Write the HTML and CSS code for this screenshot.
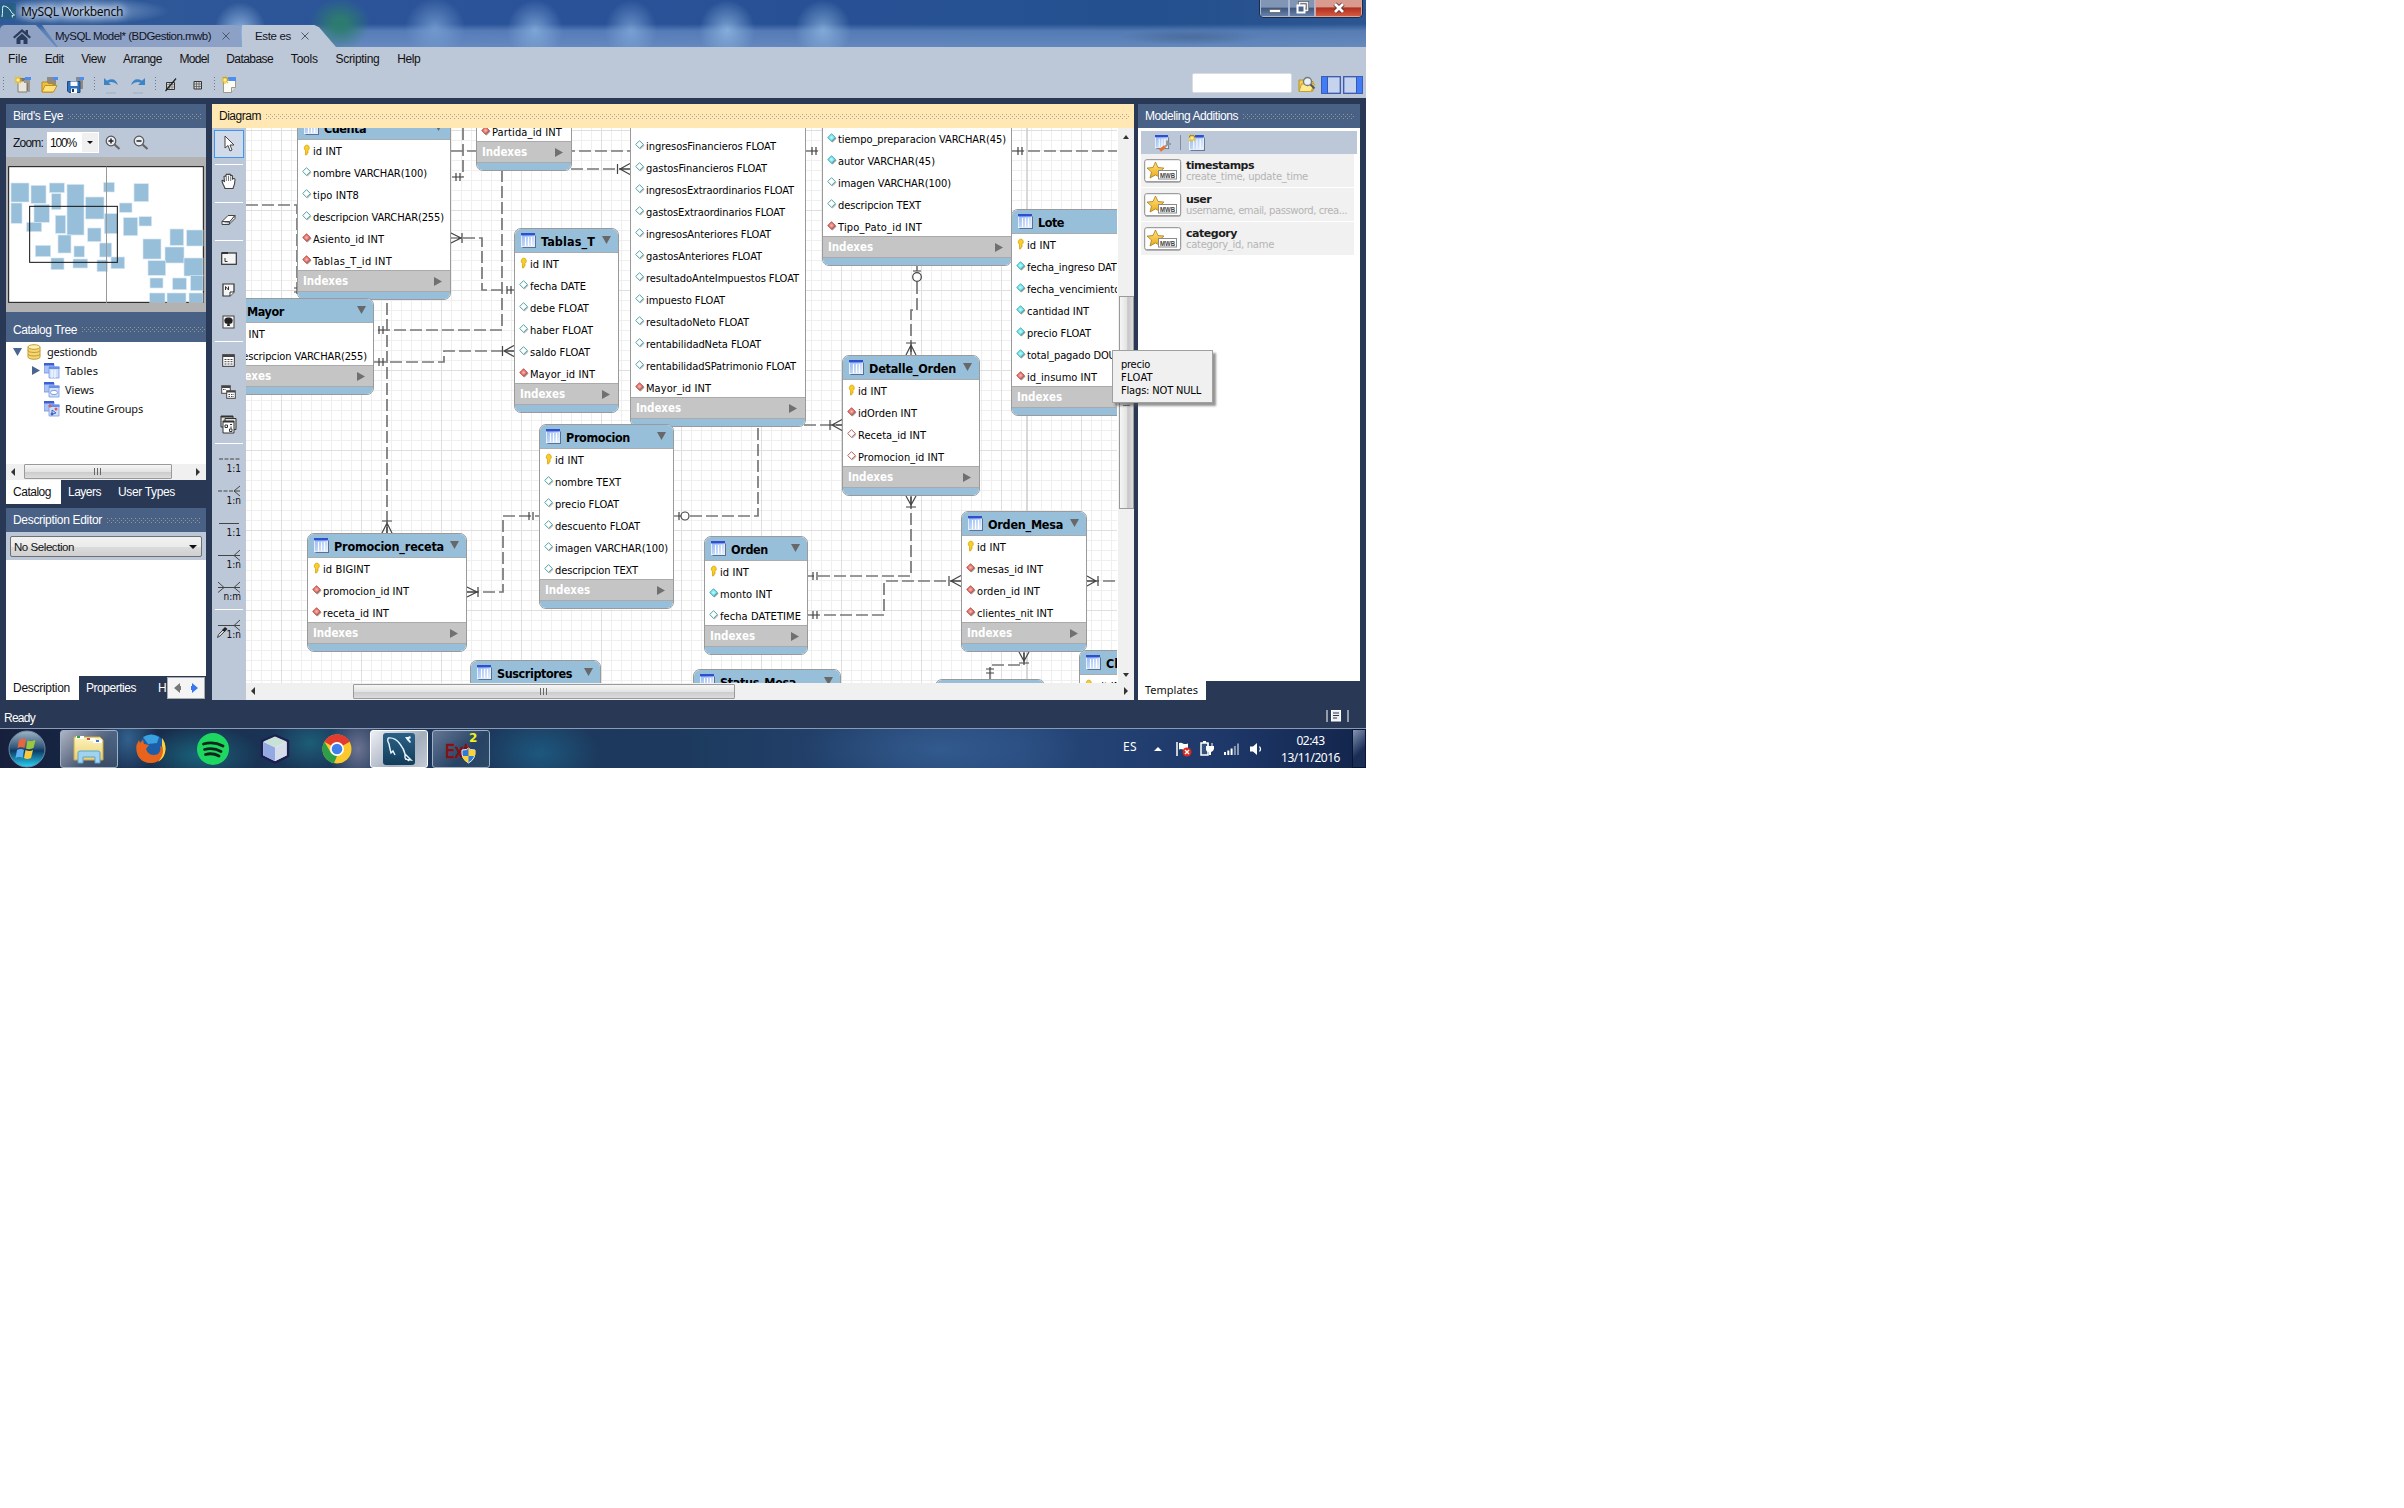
FILE: index.html
```html
<!DOCTYPE html>
<html lang="es">
<head>
<meta charset="utf-8">
<title>MySQL Workbench</title>
<link rel="stylesheet" href="styles.css">
</head>
<body>
<svg width="0" height="0" class="defs" aria-hidden="true">
  <defs>
    <linearGradient id="gTable" x1="0" y1="0" x2="1" y2="1"><stop offset="0" stop-color="#8fb4f2"/><stop offset="1" stop-color="#e8f2ff"/></linearGradient>
    <linearGradient id="gOrb" x1="0" y1="0" x2="0" y2="1"><stop offset="0" stop-color="#9fb4c6"/><stop offset=".45" stop-color="#34597a"/><stop offset=".55" stop-color="#0c3a63"/><stop offset="1" stop-color="#28d3f5"/></linearGradient>
    <linearGradient id="gFolder" x1="0" y1="0" x2="0" y2="1"><stop offset="0" stop-color="#fdf3bb"/><stop offset="1" stop-color="#e9cf73"/></linearGradient>
    <linearGradient id="gStar" x1="0" y1="0" x2="0" y2="1"><stop offset="0" stop-color="#ffe57a"/><stop offset="1" stop-color="#eba818"/></linearGradient>
    <linearGradient id="gSql" x1="0" y1="0" x2="0" y2="1"><stop offset="0" stop-color="#2b6187"/><stop offset="1" stop-color="#123c5a"/></linearGradient>
    <radialGradient id="gRed"><stop offset="0" stop-color="#f9b9b0"/><stop offset="1" stop-color="#d0504a"/></radialGradient>
    <radialGradient id="gCyan"><stop offset="0" stop-color="#b8ffff"/><stop offset="1" stop-color="#4fd0dc"/></radialGradient>
    <symbol id="table" viewBox="0 0 16 16"><rect x="1.500" y="2.500" width="13.500" height="12.500" fill="#3f5078" opacity=".7"/><rect x=".4" y=".4" width="13.200" height="13.200" fill="url(#gTable)" stroke="#f4f9ff" stroke-width=".8"/><rect x="0" y="0" width="14" height="2.400" fill="#2d4fd0"/><path d="M4.500 4v9M7.500 4v9M10.500 4v9" stroke="#fff" stroke-width="1"/></symbol>
    <symbol id="pk" viewBox="0 0 9 12"><path d="M4.500 1a3 3 0 0 0-1.500 5.400V11l1.500-.4V9h1V6.400A3 3 0 0 0 4.500 1z" fill="#f7cf2a" stroke="#dda20c" stroke-width=".8"/></symbol>
    <symbol id="null" viewBox="0 0 10 10"><path d="M5.500 1.500 9.500 5.500 5.500 9.500 1.500 5.500z" fill="#bbb"/><path d="M4.500.7 8.400 4.500 4.500 8.300.7 4.500z" fill="#fff" stroke="#4fa3a8"/></symbol>
    <symbol id="nn" viewBox="0 0 10 10"><path d="M5.500 1.500 9.500 5.500 5.500 9.500 1.500 5.500z" fill="#999"/><path d="M4.500.7 8.400 4.500 4.500 8.300.7 4.500z" fill="url(#gCyan)" stroke="#3fa9b5" stroke-width=".8"/></symbol>
    <symbol id="fk" viewBox="0 0 10 10"><path d="M5.500 1.500 9.500 5.500 5.500 9.500 1.500 5.500z" fill="#999"/><path d="M4.500.7 8.400 4.500 4.500 8.300.7 4.500z" fill="url(#gRed)" stroke="#c0483f" stroke-width=".8"/></symbol>
    <symbol id="fkn" viewBox="0 0 10 10"><path d="M5.500 1.500 9.500 5.500 5.500 9.500 1.500 5.500z" fill="#bbb"/><path d="M4.500.7 8.400 4.500 4.500 8.300.7 4.500z" fill="#fff" stroke="#b8605a"/></symbol>
    <symbol id="spark" viewBox="0 0 8 8"><path d="M4 0v8M0 4h8M1 1l6 6M7 1 1 7" stroke="#eebc1e" stroke-width="1.200"/><circle cx="4" cy="4" r="1.600" fill="#fff3a0"/></symbol>
    <symbol id="stack" viewBox="0 0 16 16"><path d="M0 1h10v9H0z" fill="#a9c4f5" stroke="#6f93dc" stroke-width=".8"/><path d="M0 0h10v2.500H0z" fill="#3c5fd6"/><path d="M5 4h10v11H5z" fill="#cfe0fb" stroke="#7b9be0" stroke-width=".8"/><path d="M5 3.500h10.500V6H5z" fill="#6a8de8"/></symbol>
    <symbol id="template" viewBox="0 0 38 24"><rect x="1" y="2" width="36" height="22" rx="2" fill="#999" opacity=".6"/><rect x=".7" y=".7" width="36" height="22" rx="2" fill="#fff" stroke="#8b8b8b"/><path d="M11.500 3l2.500 5.500 6 .6-4.600 4 1.500 6-5.400-3.200L6 19l1.500-6L3 9.100l6-.6z" fill="url(#gStar)" stroke="#a87a1c" stroke-width=".8"/><rect x="14.500" y="11.500" width="18" height="8.500" fill="#fff" stroke="#8a8a8a"/><text x="23.500" y="18.700" text-anchor="middle" textLength="15" lengthAdjust="spacingAndGlyphs" class="mwb">MWB</text></symbol>
  </defs>
</svg>

<main class="desktop">
  <header class="titlebar">
    <div class="caption">
      <svg width="16" height="16" viewBox="0 0 16 16"><rect width="16" height="16" rx="1" fill="#245f83"/><path d="M2 14C3 9 2 6 3 3c4 0 7 3 8.500 6.500l3 2.500-2.500.5.500 2" fill="none" stroke="#e4f1f8"/></svg>
      <span class="app-name" data-w="102">MySQL Workbench</span>
    </div>
    <div class="window-buttons">
      <span class="wb min"><svg width="14" height="14"><rect x="1.500" y="8.500" width="11" height="3" fill="#fff" stroke="#666" stroke-width=".8"/></svg></span>
      <span class="wb max"><svg width="14" height="14"><path d="M4.500 4V1.500h8v8H10" fill="none" stroke="#555" stroke-width="3"/><path d="M4.500 4V1.500h8v8H10" fill="none" stroke="#eee" stroke-width="1.600"/><rect x="2.500" y="4.500" width="7" height="7" fill="#4d6488" stroke="#fff" stroke-width="2"/></svg></span>
      <span class="wb close"><svg width="14" height="14"><path d="M3 3l8 8M11 3l-8 8" stroke="#5b2a27" stroke-width="4.500"/><path d="M3 3l8 8M11 3l-8 8" stroke="#fff" stroke-width="2.800"/></svg></span>
    </div>
    <nav class="tabs">
      <span class="tab home"><svg width="18" height="15" viewBox="0 0 18 15"><path d="M9 0 0 8l1.500 1.500L9 3l7.500 6.500L18 8l-3-2.700V1h-2.500v2z" fill="#2a3d5d"/><path d="M9 4.500 3.500 9.500V15h4v-4h3v4h4V9.500z" fill="#2a3d5d"/></svg></span>
      <span class="tab model"><span data-w="156">MySQL Model* (BDGestion.mwb)</span><svg class="x" width="8" height="8"><path d="M.5.5l7 7M7.500.5l-7 7" stroke="#4c5870"/></svg></span>
      <span class="tab active"><span data-w="36">Este es</span><svg class="x" width="8" height="8"><path d="M.5.5l7 7M7.500.5l-7 7" stroke="#4c5870"/></svg></span>
    </nav>
  </header>

  <nav class="menu">
    <span data-w="19">File</span><span data-w="19">Edit</span><span data-w="24">View</span><span data-w="39">Arrange</span><span data-w="29">Model</span><span data-w="47">Database</span><span data-w="27">Tools</span><span data-w="44">Scripting</span><span data-w="23">Help</span>
  </nav>

  <div class="toolbar">
    <i class="vdots"></i>
    <svg class="t1" width="18" height="18"><path d="M6 2h9v13H6z" fill="#777" /><path d="M4 5h9v11H4z" fill="#e9e6dc" stroke="#817c70"/><path d="M10 4h6v12h-2V7h-4z" fill="#9b988f"/><rect x="11" y="1" width="6" height="3" fill="#4c8ef0"/><use href="#spark" width="8" height="8"/></svg>
    <svg class="t2" width="18" height="18"><path d="M6 1h9v10H6z" fill="#8f8b80"/><rect x="12" y="1" width="5" height="3" fill="#4c8ef0"/><path d="M1 6h5l1.500 1.500H12V16H1z" fill="#f0c040" stroke="#b98a1a"/><path d="M4 9.500h12L12.500 16H1z" fill="#ffe27d" stroke="#c0921f"/></svg>
    <svg class="t3" width="18" height="18"><path d="M9 1h7v12H9z" fill="#8f8b80"/><rect x="12" y="1" width="5" height="3" fill="#4c8ef0"/><path d="M.5 5.500H13v11H2l-1.500-1.500z" fill="#2f6fc0" stroke="#1c4b8a"/><path d="M3.500 5.500h7v4.500h-7z" fill="#f4f8ff"/><path d="M4 12.500h6V17H4z" fill="#fff"/><path d="M5 13h2v3H5z" fill="#234"/></svg>
    <i class="vdots"></i>
    <svg class="t4" width="16" height="18"><path d="M1 2v7h7L5.500 6.500Q10 4.500 15 9 12 .5 4 4.700z" fill="#3c84c6"/><path d="M3 17h10" stroke="#9fadc2"/></svg>
    <svg class="t5" width="16" height="18"><path d="M15 2v7H8l2.500-2.500Q6 4.500 1 9 4 .5 12 4.700z" fill="#3c84c6"/><path d="M3 17h10" stroke="#9fadc2"/></svg>
    <i class="vdots"></i>
    <svg class="t6" width="12" height="14"><path d="M1.500 4.500h8v7h-8z" fill="#d7d7d7" stroke="#333"/><path d="M2 6.500h7M2 9h7M4.500 5v6M7 5v6" stroke="#777" stroke-width=".7"/><path d="M.5 13 11 .5" stroke="#222" stroke-width="1.300"/></svg>
    <svg class="t7" width="10" height="12"><path d="M1 2.500h7.500v7.500H1z" fill="#d7d7d7" stroke="#333"/><path d="M1 5h7.500M1 7.500h7.500M3.500 2.500V10M6 2.500V10" stroke="#555" stroke-width=".7"/></svg>
    <i class="vdots"></i>
    <svg class="t8" width="16" height="18"><path d="M2.500 2.500h12v9l-4 5h-8z" fill="#fdfdf6" stroke="#9a9a8c"/><rect x="2" y="1" width="13" height="4" fill="#4c8ef0"/><path d="M10.500 16.500v-5h4" fill="#ddd" stroke="#9a9a8c"/><use href="#spark" width="8" height="8"/></svg>
    <span class="search"></span>
    <svg class="t9" width="18" height="17"><path d="M1 4h5l1 1.500h8V15H1z" fill="#f0cc50" stroke="#b9921a"/><path d="M3.500 8h13L13 15.500H1z" fill="#ffe88e" stroke="#c0a02f"/><circle cx="9.500" cy="5.500" r="4" fill="#e8f1f8" stroke="#777" stroke-width="1.300"/><path d="M12.500 8.500l4 4" stroke="#555" stroke-width="2"/></svg>
    <svg class="t10" width="20" height="18"><rect x=".7" y=".7" width="18.600" height="16.600" fill="#c6d3ee" stroke="#3a57b0" stroke-width="1.300"/><rect x="1" y="1" width="5.500" height="16" fill="#3f7cf5"/><path d="M6.500 1v16" stroke="#3a57b0"/></svg>
    <svg width="20" height="18"><rect x=".7" y=".7" width="18.600" height="16.600" fill="#c6d3ee" stroke="#3a57b0" stroke-width="1.300"/><rect x="13.500" y="1" width="5.500" height="16" fill="#3f7cf5"/><path d="M13.500 1v16" stroke="#3a57b0"/></svg>
  </div>

  <div class="workspace">
    <aside class="left">
      <h2 class="bar"><span data-w="50">Bird's Eye</span><i class="grip"></i></h2>
      <div class="zoombar">
        <span data-w="30">Zoom:</span>
        <span class="zoomsel"><span data-w="26">100%</span><b><i class="tri"></i></b></span>
        <svg width="16" height="16"><circle cx="6" cy="6" r="4.800" fill="#e8edf4" stroke="#555" stroke-width="1.200"/><path d="M9.500 9.500l5 4.500" stroke="#666" stroke-width="2.200"/><path d="M3.500 6h5M6 3.500v5" stroke="#222" stroke-width="1.500"/></svg>
        <svg width="16" height="16"><circle cx="6" cy="6" r="4.800" fill="#e8edf4" stroke="#555" stroke-width="1.200"/><path d="M9.500 9.500l5 4.500" stroke="#666" stroke-width="2.200"/><path d="M3.500 6h5" stroke="#222" stroke-width="1.500"/></svg>
      </div>
      <div class="birdseye"><svg id="minimap" width="196" height="137" viewBox="24 498 588 411"><rect x="26" y="500" width="584" height="407" fill="#fff" stroke="#111" stroke-width="3"/><g id="miniTables"></g><path d="M319.500 500v409" stroke="#999" stroke-width="3"/><rect x="89" y="619" width="263" height="168" fill="none" stroke="#111" stroke-width="3"/></svg></div>
      <h2 class="bar tall"><span data-w="64">Catalog Tree</span><i class="grip"></i></h2>
      <div class="tree">
        <div class="node root"><svg width="9" height="8"><path d="M0 0h9L4.500 8z" fill="#4a6590"/></svg><svg class="db" width="14" height="16"><path d="M1 3v10c0 3 12 3 12 0V3" fill="#f5d672" stroke="#c29c35"/><ellipse cx="7" cy="3" rx="6" ry="2.300" fill="#fdf0b4" stroke="#c29c35"/><path d="M1 6.500c0 2.600 12 2.600 12 0M1 10c0 2.600 12 2.600 12 0" fill="none" stroke="#c29c35"/></svg><span data-w="50">gestiondb</span></div>
        <div class="node"><svg width="8" height="9"><path d="M0 0v9l8-4.500z" fill="#4a6590"/></svg><svg class="st" width="16" height="16"><use href="#stack"/><path d="M8 7v8M11 7v8" stroke="#fff"/></svg><span data-w="33">Tables</span></div>
        <div class="node"><svg width="8" height="9"></svg><svg class="st" width="16" height="16"><use href="#stack"/><ellipse cx="10" cy="10.500" rx="3.500" ry="2.200" fill="#fff" stroke="#7b9be0"/></svg><span data-w="29">Views</span></div>
        <div class="node"><svg width="8" height="9"></svg><svg class="st" width="16" height="16"><use href="#stack"/><path d="M8 9l4 3-4 1z" fill="none" stroke="#4668b8"/><circle cx="6" cy="5" r="1.500" fill="#d85a5a"/><circle cx="12" cy="8" r="1.500" fill="#d85a5a"/><circle cx="8" cy="13" r="1.500" fill="#3d62c4"/></svg><span data-w="78">Routine Groups</span></div>
      </div>
      <div class="hscroll"><i class="al"></i><b class="thumb"><i class="ridge"></i></b><i class="ar"></i></div>
      <div class="tabrow"><span class="on" data-w="38">Catalog</span><span data-w="33">Layers</span><span data-w="57">User Types</span></div>
      <h2 class="bar desc"><span data-w="89">Description Editor</span><i class="grip"></i></h2>
      <div class="selbar"><span class="select"><span data-w="60">No Selection</span><i class="tri"></i></span></div>
      <div class="blank"></div>
      <div class="tabrow low"><span class="on" data-w="57">Description</span><span data-w="50">Properties</span><span class="cut">H</span><em><svg width="28" height="12"><path d="M8 1v3h1v4H8v3L2 6z" fill="#777"/><path d="M20 1v3h-1v4h1v3l6-5z" fill="#3a76f0"/></svg></em></div>
    </aside>

    <section class="diagram">
      <h2 class="bar yellow"><span data-w="42">Diagram</span><i class="grip"></i></h2>
      <div class="editor">
        <div class="tools">
          <span class="tool sel"><svg width="12" height="18"><path d="M2 1v12l3-2.500 2 5.500 2-1-2-5h4z" fill="#fff" stroke="#444"/></svg></span><hr>
          <span class="tool hand"><svg width="16" height="17"><path d="M4 15.500C3 12 .8 10 1 7.500c1.500-.5 2 .5 2.500 1.500L3 3.500c1-1 2-.5 2 .5V2c.5-1.200 2-1 2.200 0 .3-1.200 2-1.200 2.300 0V3c.5-1 2-.8 2 .4V6c1.200-1 2.600-.4 2.500 1C14 10 13 13 12 15.500z" fill="#fff" stroke="#444" stroke-width="1.100"/><path d="M5.300 4v4M7.500 3v5M9.700 3.500V8" stroke="#666" stroke-width=".9"/></svg></span><hr>
          <span class="tool eraser"><svg width="16" height="12"><path d="M1 7.500 7 1.500h7L8.500 8z" fill="#fff" stroke="#444"/><path d="M1 7.500V10.500h7L14 4.500v-3L8.500 8v2.500M1 7.500h7.500" fill="#eee" stroke="#444"/></svg></span><hr>
          <span class="tool s"><svg width="16" height="14"><rect x=".7" y="2" width="14.600" height="11.300" fill="#f5f5f5" stroke="#333" stroke-width="1.200"/><path d="M1 1h6v2H1z" fill="#333"/><path d="M4 7v3.500h2.500" fill="none" stroke="#333"/></svg></span>
          <span class="tool s"><svg width="13" height="14"><path d="M1 1h11v8l-4 4H1z" fill="#f5f5f5" stroke="#333" stroke-width="1.200"/><path d="M8 13V9h4" fill="#fff" stroke="#333"/><path d="M3.500 7V3.500L6.500 7V3.500" fill="none" stroke="#333"/></svg></span>
          <span class="tool s"><svg width="13" height="14"><rect x="1" y="1" width="11" height="12" fill="#f5f5f5" stroke="#444"/><path d="M6.500 2.500a3.500 3 0 0 1 4 4c0 2-2 2.500-3 2l.5 2.500H5l.5-2.500c-1 .5-3 0-3-2a3.500 3 0 0 1 4-4z" fill="#222"/></svg></span><hr class="h2">
          <span class="tool s"><svg width="13" height="13"><rect x=".7" y=".7" width="11.600" height="11.600" fill="#fff" stroke="#333"/><path d="M1 1h11v2H1z" fill="#444"/><path d="M2.500 5.500h8M2.500 7.700h8M2.500 10h8" stroke="#444" stroke-dasharray="2 1"/></svg></span>
          <span class="tool s"><svg width="15" height="14"><rect x=".7" y=".7" width="8.600" height="7.600" fill="#fff" stroke="#444"/><path d="M1 1h8v2H1z" fill="#444"/><rect x="5.700" y="5.700" width="8.600" height="7.600" fill="#fff" stroke="#444"/><path d="M6 6h8v1.500H6z" fill="#444"/><path d="M2 4.500h3M7.500 9.500h5.500M7.500 11.500h5.500" stroke="#444" stroke-dasharray="1.500 1"/></svg></span>
          <span class="tool s"><svg width="17" height="19"><path d="M1 1h12v11H1z" fill="#ddd" stroke="#333"/><path d="M5 3.500h11v11H5z" fill="#ddd" stroke="#333"/><path d="M3 6h11v12H3z" fill="#fff" stroke="#333"/><path d="M1 1h12v1.500H1zM3 6h11v1.500H3z" fill="#333"/><path d="M5 10h2.500v2.500H5zM9.500 14h2.500v2.500H9.500zM10 9.500h2M11 11.500v2" fill="none" stroke="#333"/></svg></span><hr class="h3">
          <span class="rel"><svg width="33" height="32"><path d="M7 9h21" stroke="#444" stroke-dasharray="4 1.500"/><text x="29" y="22">1:1</text></svg></span>
          <span class="rel"><svg width="33" height="32"><path d="M6 9h17" stroke="#444" stroke-dasharray="4 1.500"/><path d="M28 4 22 9l6 5M22 9h6" fill="none" stroke="#444"/><text x="29" y="22">1:n</text></svg></span>
          <span class="rel"><svg width="33" height="32"><path d="M7 9.500h20" stroke="#444"/><text x="29" y="22">1:1</text></svg></span>
          <span class="rel"><svg width="33" height="32"><path d="M6 9.500h22M28 4l-6 5.500 6 5" fill="none" stroke="#444"/><text x="29" y="22">1:n</text></svg></span>
          <span class="rel"><svg width="33" height="32"><path d="M6 9.500h22M28 4l-6 5.500 6 5M6 4l6 5.500-6 5" fill="none" stroke="#444"/><text x="29" y="22">n:m</text></svg></span><hr class="h4">
          <span class="rel"><svg width="33" height="32"><path d="M6 9.500h22M28 4l-6 5.500 6 5" fill="none" stroke="#444"/><path d="M5.500 21.500l1-3 4.500-4.500 1.500 1.500-4.500 4.500z" fill="#ddd" stroke="#444"/><path d="M10 14l3-3 2.500 2-3 3z" fill="#222"/><text x="29" y="22">1:n</text></svg></span>
        </div>
        <div class="canvas-col">
          <div class="canvas-row">
            <div class="canvas" id="canvas">
              <svg class="links" width="871" height="555" viewBox="246 128 871 555">
                <path d="M1027 128v555" stroke="#cfcfcf" stroke-width="1.600"/>
                <g class="dash">
                  <path d="M246 205H297V298M451 151H630M806 151h16M1012 151h105M463 128V177H451M571 169h59M502 170V330H374M463 238H482V290H514M374 362H444V351H514M387 303V533M467 592H503V516H539M690 516H758V427M804 425h38M917 266v5M917 282V310H911V355M911 497V576H808M808 615H884V581H961M1087 581h30M1024 653V665H990V679"/>
                </g>
                <g class="mark">
                  <path d="M294 288h3M294 292h3M812 147v8M816 147v8M1018 147v8M1022 147v8M456 173v8M460 173v8"/>
                  <path d="M617.500 164v10M630 163.500 620 169l10 5.500M620 169h10M451 233l10 5-10 5M451 238h10M462 233v10M507 286v8M511 286v8"/>
                  <path d="M379 326v8M383 326v8M379 358v8M383 358v8M502.500 346v10M514 345.500 504 351l10 5.500M504 351h10"/>
                  <path d="M382 521h10M382 533l5-10 5 10M387 523v10M467 587l10 5-10 5M467 592h10M478 587v10M529 512v8M533 512v8"/>
                  <path d="M674 516h7M679 512v8M830 420v10M842 419.500 832 425l10 5.500M832 425h10M913 271h8M906 343h10M906 355l5-10 5 10M911 345v10"/>
                  <path d="M906 496l5 9 5-9M911 496v9M906 507h10M813 572v8M817 572v8M813 611v8M817 611v8M949 576v10M961 575.500 951 581l10 5.500M951 581h10"/>
                  <path d="M1087 576l9 5-9 5M1087 581h9M1098 576v10M1019 652l5 9 5-9M1024 652v9M1019 663h10M986 669h8M986 673h8"/>
                  <circle cx="685" cy="516" r="4"/><circle cx="917" cy="277" r="4.300"/>
                </g>
              </svg>
            </div>
            <div class="vscroll"><i class="au"></i><b class="vthumb"><i></i></b><i class="ad"></i></div>
          </div>
          <div class="hscroll wide"><i class="al"></i><b class="thumb"><i class="ridge"></i></b><i class="ar"></i></div>
        </div>
      </div>
    </section>

    <aside class="right">
      <h2 class="bar"><span data-w="93">Modeling Additions</span><i class="grip"></i></h2>
      <div class="additions">
        <div class="addbar">
          <svg width="17" height="18"><use href="#table" x="0" y="1" width="15" height="15"/><path d="M5 16.500l5-4" stroke="#e8742c" stroke-width="3"/><path d="M10 12.500l4-3M12 6.500v3.500h4" fill="none" stroke="#999" stroke-width="2"/></svg>
          <i></i>
          <svg width="18" height="18"><use href="#table" x="1" y="1" width="17" height="17"/><use href="#spark" width="8" height="8"/></svg>
        </div>
        <div class="tpl"><svg width="38" height="24"><use href="#template"/></svg><div><b data-w="68">timestamps</b><small data-w="122">create_time, update_time</small></div></div>
        <div class="tpl"><svg width="38" height="24"><use href="#template"/></svg><div><b data-w="25">user</b><small data-w="161">username, email, password, crea...</small></div></div>
        <div class="tpl"><svg width="38" height="24"><use href="#template"/></svg><div><b data-w="51">category</b><small data-w="88">category_id, name</small></div></div>
      </div>
      <div class="tabrow"><span class="on" data-w="53">Templates</span></div>
    </aside>
    <div class="tooltip"><span data-w="29">precio</span><span data-w="32">FLOAT</span><span data-w="80">Flags: NOT NULL</span></div>
  </div>

  <footer class="status"><span data-w="31">Ready</span><svg width="24" height="12"><path d="M1 0v12M22 0v12" stroke="#fff"/><rect x="5.500" y=".5" width="9" height="10.500" fill="#eee" stroke="#fff"/><path d="M7 3h6M7 5.500h6M7 8h4" stroke="#293955"/></svg></footer>

  <div class="taskbar">
    <span class="orb"><svg width="40" height="40"><circle cx="20" cy="20" r="18" fill="url(#gOrb)" stroke="#6d8aa6"/><g transform="translate(0 1)"><path d="M12 10q4-2 7-.5L17.500 18q-4-2-7 0z" fill="#e8643a"/><path d="M20.500 10.500q4 1.500 8-.5L26.500 18q-4 2-7.500.5z" fill="#98c93c"/><path d="M10 20q4-2 7 0l-1.500 8q-3-2-7 0z" fill="#5fb0f0"/><path d="M18.500 20q4 2 7.500 0l-2 8q-4 2-7 0z" fill="#fbc93a"/></g></svg></span>
    <span class="slot open"><svg width="34" height="32"><path d="M2 4h26l3 3v20H2z" fill="url(#gFolder)" stroke="#c8a94a"/><path d="M4 3h8v3H4zM15 5h8v3h-8zM21 7h9v3h-9z" fill="#fff"/><path d="M5 3h3v2H5z" fill="#2fa83a"/><path d="M15 5h3v2h-3z" fill="#d84a3a"/><path d="M24 7h3v2h-3z" fill="#3a7ad8"/><path d="M6 30V20q0-2 2-2h18q2 0 2 2v10h-5v-6H11v6z" fill="#9fd3ef" stroke="#5fa3cc"/></svg></span>
    <span class="slot"><svg width="32" height="32"><circle cx="17" cy="15" r="13.500" fill="#1c5fa8"/><path d="M8 4Q16-1 24 4l-2 6-9 1z" fill="#3aa0e0"/><path d="M27 5c7 9 3 24-10 25C6 31 0 22 1.500 12L4 7l1 3 3-3 1 4 5 1-3 4q2 6 8 6 8-1 6-9 3 1 3 4 2-6-1-12z" fill="#e8641c"/><path d="M27 5c6 8 4 20-4 24 5-6 6-11 4-16z" fill="#ffd23a"/></svg></span>
    <span class="slot"><svg width="32" height="32"><circle cx="16" cy="16" r="16" fill="#1ed760"/><path d="M6.500 11q10-3 19.500 2M7.500 16.500q9-2.500 16.500 2M8.500 21.500q7-2 13.500 1.500" fill="none" stroke="#10251a" stroke-width="2.800" stroke-linecap="round"/></svg></span>
    <span class="slot"><svg width="30" height="30"><path d="M15 1.500 28 7v15L15 28.500 2 22V7z" fill="#dfe9fa" stroke="#1d1f50" stroke-width="2.500"/><path d="M15 2.500 26.500 7.500 15 13 3.500 7.500z" fill="#c8e2d8"/><path d="M3.500 8 15 13.500V27L3.500 21.500z" fill="#92a9e2"/><path d="M26.500 8 15 13.500V27l11.500-5.500z" fill="#d5ddea"/></svg></span>
    <span class="slot"><svg width="32" height="32"><circle cx="16" cy="16" r="14.500" fill="#fbc92c"/><path d="M16 16 3.400 8.800A14.500 14.500 0 0 1 28.600 8.800z" fill="#e23b30"/><path d="M3.400 8.800 10 20l6 3-3 7.300A14.500 14.500 0 0 1 3.400 8.800z" fill="#2f9e48"/><path d="M16 9h12.800q-5-8-13-7.500Z" fill="#e23b30"/><circle cx="16" cy="16" r="7" fill="#fff"/><circle cx="16" cy="16" r="5.300" fill="#3f80ea"/></svg></span>
    <span class="slot open bright"><svg width="32" height="32"><rect width="32" height="32" rx="3" fill="url(#gSql)"/><path d="M5 5q7-1 12 6 4 5 5 10l6 6-6-1M5 5q-1 3 1 6 1 5 2 9l2-2 2 4M22 21l0 4 4 3" fill="none" stroke="#e8f4fb" stroke-width="1.400"/><path d="M22 4l2 3 3 3 1-1-2-3 2-1-1-2-2 1z" fill="#e8f4fb"/></svg></span>
    <span class="slot open dim"><svg width="34" height="36"><text x="1" y="27" textLength="25" lengthAdjust="spacingAndGlyphs" class="ext">Ext</text><text x="25" y="11" class="two">2</text><path d="M18 19q6 0 6.500-2 .5 2 6.500 2 1 9-6.500 13-7.500-4-6.500-13z" fill="#2f7ad8" stroke="#eee"/><path d="M24.500 17.500V25H31q.3-3 0-6-5 0-6.500-1.500zM18 25h6.500v7q-5-2.500-6.500-7z" fill="#fbd23a"/></svg></span>
    <div class="tray">
      <span class="es" data-w="14">ES</span>
      <svg class="up" width="8" height="4"><path d="M0 4l4-4 4 4z" fill="#fff"/></svg>
      <svg class="flag" width="16" height="16"><path d="M1 1v14" stroke="#fff" stroke-width="1.500"/><path d="M3 2q2.500-.5 4 .5t5 0v6q-3 1-5 0t-4 0z" fill="#fff"/><circle cx="11" cy="11" r="4.500" fill="#d82a20"/><path d="M9 9l4 4M13 9l-4 4" stroke="#fff" stroke-width="1.400"/></svg>
      <svg class="plug" width="15" height="17"><path d="M1 3h7v12H1z" fill="#33547f" stroke="#fff" stroke-width="1.500"/><path d="M3 1h3v2H3z" fill="#fff"/><path d="M6 6h8v3q-1 3-3 3v3H9v-3q-3 0-3-3zM7.500 3h1v3h-1zM11.500 3h1v3h-1z" fill="#fff"/></svg>
      <svg class="sig" width="15" height="12"><path d="M0 9h2v3H0zM3.300 7.500h2V12h-2zM6.600 5.500h2V12h-2z" fill="#fff"/><path d="M9.900 3h2v9h-2zM13 .5h2V12h-2z" fill="#8a98b0"/></svg>
      <svg class="spk" width="13" height="14"><path d="M0 4.500h3L7 1v12L3 9.500H0z" fill="#fff"/><path d="M9.500 4.500q2 2.500 0 5" fill="none" stroke="#fff" stroke-width="1.200"/></svg>
      <span class="clock"><span data-w="28">02:43</span><span data-w="59">13/11/2016</span></span>
      <i class="show"></i>
    </div>
  </div>
</main>
<script src="script.js"></script>
</body>
</html>
```
FILE: styles.css
```css
* { box-sizing: border-box; }
body { margin: 0; background: #fff; font: 12px "Liberation Sans", Arial, sans-serif; color: #111; }
.defs { position: absolute; }
svg { display: block; flex: none; }
i, em { font-style: normal; }
[data-w] { white-space: nowrap; }
.desktop { width: 1366px; height: 768px; display: flex; flex-direction: column; background: #293955; overflow: hidden; }

/* window frame */
.titlebar { height: 47px; position: relative; display: flex; flex-wrap: wrap; justify-content: space-between; align-content: flex-start;
  background:
    radial-gradient(ellipse 90px 14px at 80px 11px, rgba(165,190,225,.8), transparent),
    radial-gradient(ellipse 30px 26px at 340px 24px, rgba(45,125,110,.95) 20%, transparent),
    radial-gradient(ellipse 26px 30px at 240px 32px, rgba(160,195,235,.85), transparent),
    radial-gradient(ellipse 30px 30px at 435px 28px, rgba(125,165,215,.75), transparent),
    radial-gradient(ellipse 28px 30px at 535px 30px, rgba(140,180,225,.75), transparent),
    radial-gradient(ellipse 26px 30px at 631px 30px, rgba(140,180,225,.65), transparent),
    radial-gradient(ellipse 28px 30px at 727px 30px, rgba(150,190,230,.75), transparent),
    radial-gradient(ellipse 28px 30px at 823px 30px, rgba(150,190,230,.7), transparent),
    radial-gradient(ellipse 70px 8px at 1190px 37px, rgba(65,95,140,.6), transparent),
    linear-gradient(180deg, transparent 24px, rgba(130,165,215,.5) 31px, rgba(140,172,218,.6) 100%),
    linear-gradient(90deg, #2f5a97, #2a5299 40%, #24508f 85%, #2c5691); }
.caption { display: flex; align-items: center; height: 22px; gap: 5px; width: 500px; }
.app-name { font: 12px "Noto Sans", sans-serif; color: #0a0a0a; text-shadow: 0 0 6px #dfe9f7, 0 0 8px #dfe9f7, 0 0 12px #c9d9ee; }
.window-buttons { display: flex; width: 104px; height: 18px; margin-right: 3px; border: 1px solid #1d2c44; border-top: 0; border-radius: 0 0 5px 5px; overflow: hidden; }
.wb { display: flex; align-items: center; justify-content: center; border: 1px solid #a8b8cf; border-top: 0; background: linear-gradient(#8195b5 45%, #3e5680 50%, #6681ab); }
.min { width: 29px; } .max { width: 26px; } .close { flex: 1; background: linear-gradient(#d99a90 42%, #b0301f 50%, #d65a41); border-color: #d9a79f; }
.tabs { display: flex; height: 22px; margin-top: 3px; width: 100%; }
.tab { display: flex; align-items: center; font-size: 11.500px; color: #10151f; height: 22px; }
.home { width: 56px; padding-left: 13px; background: #8fa2c4; clip-path: polygon(0 0, 64% 0, 100% 100%, 0 100%); border-radius: 5px 0 0 0; }
.model { margin-left: -14px; width: 199px; padding-left: 13px; background: #8da1c6; clip-path: polygon(0 0, 97% 0, 100% 12%, 100% 100%, 8% 100%); }
.model .x { margin-left: 11px; }
.active { margin-left: 1px; width: 94px; padding-left: 13px; background: #bcc7d8; clip-path: polygon(0 0, 77% 0, 82% 10%, 100% 100%, 0 100%); }
.active .x { margin-left: 10px; }
.menu { height: 24px; background: #bcc7d8; display: flex; align-items: center; gap: 17.650px; padding-left: 8px; }
.toolbar { height: 27px; background: #bcc7d8; display: flex; align-items: center; padding: 0 3px 0 3px; }
.vdots { width: 1px; height: 15px; background: repeating-linear-gradient(#6f7b90 0 1px, transparent 1px 3px); }
.t1 { margin-left: 10px; } .t2 { margin-left: 9px; } .t3 { margin-left: 8px; margin-right: 9px; }
.t4 { margin-left: 8px; } .t5 { margin-left: 11px; margin-right: 9px; } .t6 { margin-left: 9px; } .t7 { margin: 0 11px 0 16px; }
.t8 { margin-left: 6px; } .search { width: 100px; height: 20px; margin: -3px 6px 0 auto; background: #fff; border: 1px solid #d9dce2; border-radius: 2px; }
.t10 { margin: 0 2px 0 5px; }

/* docked panels */
.workspace { height: 602px; padding: 6px 6px 0 6px; display: flex; position: relative; }
.bar { margin: 0; height: 24px; flex: none; display: flex; align-items: center; gap: 5px; padding: 0 5px 0 7px; background: #4a6186; color: #fff; font-size: 12px; font-weight: 400; }
.yellow { background: #ffe8b4; color: #111; }
.tall { height: 30px; padding-right: 0; padding-top: 5px; }
.desc { margin-top: 4px; }
.grip { flex: 1; height: 5px; opacity: .8; background-image: radial-gradient(circle at .5px .5px, #a9a596 .6px, transparent .8px), radial-gradient(circle at 2.500px 2.500px, #a9a596 .6px, transparent .8px); background-size: 4px 4px; }
.yellow .grip { opacity: 1; }
.left { width: 200px; height: 596px; display: flex; flex-direction: column; }
.zoombar { height: 29px; background: #bcc7d8; display: flex; align-items: center; padding-left: 7px; }
.zoombar svg { margin-left: 6px; } .zoombar svg + svg { margin-left: 12px; }
.zoomsel { width: 52px; height: 21px; margin-left: 4px; background: #fff; display: flex; justify-content: space-between; align-items: center; padding-left: 3px; }
.zoomsel b { width: 16px; height: 19px; margin-right: 1px; background: #f0f0f0; display: flex; align-items: center; justify-content: center; }
.tri { width: 0; height: 0; border: 3px solid transparent; border-top: 3.500px solid #111; border-bottom: 0; }
.birdseye { height: 155px; background: #b2b2b2; padding: 9px 0 0 2px; }
.tree { height: 122px; background: #fff; font: 11px "Noto Sans", "Open Sans", sans-serif; padding: 0 0 0 7px; }
.node { height: 19px; display: flex; align-items: center; padding-left: 19px; }
.root { padding-left: 0; } .db { margin: 0 6px 0 5px; } .st { margin: 0 5px 0 4px; }
.hscroll { height: 16px; background: #f0f0f0; display: flex; align-items: center; padding: 0 6px 1px 5px; }
.thumb { width: 148px; height: 15px; margin-left: 9px; border: 1px solid #9a9a9a; border-radius: 1px; background: linear-gradient(#f6f6f6, #e4e4e4 50%, #cbcbcb 52%, #dcdcdc); display: flex; align-items: center; justify-content: center; }
.ridge { width: 8px; height: 7px; background: repeating-linear-gradient(90deg, #666 0 1px, transparent 1px 3px); }
.al { border: 4px solid transparent; border-right-color: #333; border-left: 0; }
.ar { border: 4px solid transparent; border-left-color: #333; border-right: 0; margin-left: auto; }
.al, .ar { width: 4px; height: 8px; }
.tabrow { height: 24px; display: flex; color: #fff; flex: none; }
.tabrow > span { display: flex; align-items: center; margin-right: 17px; }
.tabrow .on { background: #fff; color: #111; padding: 0 10px 0 7px; margin-right: 7px; box-sizing: content-box; }
.tabrow.low .on { padding-right: 9px; }
.low .cut { margin: 0; padding-left: 5px; width: 14px; }
.low em { width: 38px; height: 22px; margin: 1px 1px 0 auto; background: #f4f4f4; border: 1px solid #aaa; display: flex; align-items: center; justify-content: center; }
.selbar { height: 28px; background: #bcc7d8; padding: 4px 4px 0; }
.select { height: 21px; border: 1px solid #707070; border-radius: 2px; background: linear-gradient(#f2f2f2, #ebebeb 50%, #dcdcdc 52%, #cfcfcf); display: flex; align-items: center; justify-content: space-between; padding: 0 4px 0 3px; font-size: 11.500px; }
.select .tri { border-width: 4px 4px 0; }
.blank { flex: 1; background: #fff; }

/* diagram editor */
.diagram { width: 922px; height: 596px; margin-left: 6px; display: flex; flex-direction: column; }
.editor { display: flex; flex: 1; }
.tools { width: 34px; background: #bcc7d8; }
.tools hr { border: 0; height: 1px; margin: 0 3px 1px; width: 28px; background: #fff; }
.tools .h2 { margin-top: 3px; margin-bottom: 2px; } .tools .h3 { margin: 3px 3px 6px; } .tools .h4 { margin: -1px 3px 6px; }
.tool { display: flex; height: 36px; width: 34px; align-items: center; justify-content: center; padding-right: 1px; }
.hand { padding-bottom: 6px; } .eraser { padding-bottom: 4px; }
.tool.s { height: 32px; }
.tools .sel { height: 28px; width: 30px; margin: 2px 2px 6px; border: 1px solid #3b97f3; background: #d0dae8; }
.rel { display: block; height: 32px; }
.rel text { font: 10px "DejaVu Sans Condensed", "DejaVu Sans", sans-serif; text-anchor: end; fill: #111; }
.canvas-col { flex: 1; display: flex; flex-direction: column; background: #fff; }
.canvas-row { display: flex; height: 555px; }
.canvas { width: 871px; height: 555px; position: relative; overflow: hidden; background-color: #fff;
  background-image: linear-gradient(90deg, #dfdfdf 1px, transparent 1px), linear-gradient(#dfdfdf 1px, transparent 1px), linear-gradient(90deg, #efefef 1px, transparent 1px), linear-gradient(#efefef 1px, transparent 1px);
  background-size: 80px 80px, 80px 80px, 10px 10px, 10px 10px; background-position: 35px 0, 0 2px, 5px 0, 0 2px; }
.links { position: absolute; left: 0; top: 0; }
.dash path { fill: none; stroke: #777; stroke-width: 1.700; stroke-dasharray: 12 4; }
.mark { fill: none; stroke: #444; stroke-width: 1.200; }
.mark circle { fill: #fff; }
.vscroll { width: 16px; margin-left: 1px; background: #f0f0f0; display: flex; flex-direction: column; align-items: center; padding: 7px 0 6px; }
.au { border: 3.500px solid transparent; border-bottom: 4px solid #333; border-top: 0; }
.ad { border: 3.500px solid transparent; border-top: 4px solid #333; border-bottom: 0; margin-top: auto; }
.vthumb { width: 15px; height: 213px; margin-top: 157px; border: 1px solid #9a9a9a; background: linear-gradient(90deg, #f6f6f6, #e4e4e4 50%, #c6c6c6 60%, #dcdcdc); display: flex; align-items: center; justify-content: center; }
.vthumb i { width: 7px; height: 8px; background: repeating-linear-gradient(#666 0 1px, transparent 1px 3px); }
.wide { height: 17px; } .wide .thumb { width: 382px; margin-left: 98px; }

/* entity figures placed on the canvas */
.entity { position: absolute; background: #fff; border: 1px solid #9a9a9a; border-radius: 7px; overflow: hidden; font: 11px "DejaVu Sans Condensed", "DejaVu Sans", sans-serif; font-stretch: condensed; }
.entity header { height: 24px; background: #98bfda; border-bottom: 1px solid #a9adb0; display: flex; align-items: center; padding: 1px 7px 0 6px; font-weight: 700; font-size: 12.500px; color: #000; }
.entity header svg { margin-right: 4px; margin-top: -1px; }
.entity header .down { margin: -3px 0 0 auto; }
.column { height: 22px; display: flex; align-items: center; padding-left: 4px; white-space: nowrap; color: #000; }
.column svg { margin: -2px 1px 0 0; }
.indexes { height: 22px; background: #c5c5c5; border: solid #aaa; border-width: 1px 0; display: flex; align-items: center; justify-content: space-between; padding: 0 8px 0 5px; color: #fff; font-weight: 700; font-size: 11.500px; }
.cap { height: 7px; background: #98bfda; }

/* right dock */
.right { width: 222px; height: 596px; margin-left: 4px; display: flex; flex-direction: column; }
.additions { flex: none; height: 553px; background: #fff; padding: 3px; }
.right .tabrow { height: 19px; } .right .on { padding: 0 8px 2px 7px; font: 11px "Noto Sans", sans-serif; }
.addbar { height: 23px; background: #bcc7d8; display: flex; align-items: center; padding-left: 14px; }
.addbar i { width: 1px; height: 15px; background: #7f8ca3; margin: 0 7px 0 8px; }
.tpl { width: 213px; height: 33px; margin-bottom: 1px; background: #f1f1f1; display: flex; padding: 5px 0 0 3px; gap: 4px; }
.tpl div { display: flex; flex-direction: column; }
.tpl b { font: 700 11px/13px "DejaVu Sans", sans-serif; color: #1c1c1c; }
.tpl small { font: 10px/10px "DejaVu Sans", sans-serif; color: #b4b4b4; }
.mwb { font: 700 7.500px "Liberation Sans", sans-serif; fill: #444; }
.tooltip { position: absolute; left: 1112px; top: 252px; width: 101px; height: 53px; padding: 7px 0 0 8px; display: flex; flex-direction: column; align-items: flex-start; background: #f0f0f0; border: 1px solid #a0a0a0; box-shadow: 3px 3px 2px rgba(80,80,80,.6); font: 11px/13px "DejaVu Sans Condensed", sans-serif; color: #000; }

.status { height: 28px; display: flex; align-items: center; justify-content: space-between; padding: 7px 16px 0 4px; color: #fff; }
.status svg { margin-bottom: 3px; }

/* windows taskbar */
.taskbar { height: 40px; border-top: 1px solid #8b9bb5; display: flex; align-items: center;
  background:
    radial-gradient(ellipse 60px 30px at 200px 26px, rgba(25,120,140,.7), transparent),
    radial-gradient(ellipse 30px 40px at 128px 10px, rgba(60,120,170,.7), transparent),
    radial-gradient(ellipse 40px 30px at 310px 14px, rgba(30,120,140,.6), transparent),
    radial-gradient(ellipse 30px 40px at 358px 20px, rgba(130,130,160,.8), transparent),
    radial-gradient(ellipse 60px 40px at 540px 24px, rgba(30,100,140,.7), transparent),
    radial-gradient(ellipse 140px 50px at 940px 20px, rgba(60,105,160,.6), transparent),
    linear-gradient(90deg, #16203c, #1a3456 20%, #1d3a5e 50%, #27487a 75%, #1d3768 90%, #12244a); }
.orb { width: 53px; padding-left: 7px; margin-right: 7px; }
.slot { width: 58px; height: 38px; margin-right: 4px; display: flex; align-items: center; justify-content: center; }
.open { border: 1px solid #9fb0c4; border-radius: 3px; background: linear-gradient(135deg, rgba(225,228,240,.75), rgba(110,125,150,.55) 60%, rgba(80,100,120,.5)); }
.bright { background: linear-gradient(135deg, #edeff5, #a2aebd 60%, #c3cbd6); border-color: #fff; }
.dim { background: linear-gradient(135deg, rgba(150,160,190,.6), rgba(50,80,110,.5) 60%, rgba(60,90,115,.5)); }
.ext { font: 19px "DejaVu Sans Condensed", sans-serif; fill: #8c0d0d; stroke: #8c0d0d; stroke-width: .7; }
.two { font: 700 12px "DejaVu Sans", sans-serif; fill: #f5ee1e; }
.tray { margin-left: auto; display: flex; align-items: center; height: 39px; color: #fff; font: 12px "Noto Sans", sans-serif; }
.es { margin-top: -5px; } .up { margin: 0 0 0 17px; } .flag { margin-left: 14px; } .plug { margin-left: 8px; } .sig { margin-left: 9px; } .spk { margin-left: 11px; }
.clock { display: flex; flex-direction: column; align-items: center; line-height: 17px; margin-left: 18px; width: 59px; }
.show { width: 14px; height: 39px; margin-left: 12px; border: 1px solid #0a1630; background: linear-gradient(135deg, #8494b4, #1a2d55 60%); }
```
FILE: script.js
```js
// Entity figures of the model: x/y/width on the canvas sheet, then [icon, label, label width].
const ORIGIN = { x: 246, y: 128 };
const entities = [
  { x: 297, y: 115, w: 154, title: "Cuenta", tw: 42, cols: [["pk", "id INT", 29], ["null", "nombre VARCHAR(100)", 114], ["null", "tipo INT8", 46], ["null", "descripcion VARCHAR(255)", 131], ["fk", "Asiento_id INT", 71], ["fk", "Tablas_T_id INT", 79]] },
  { x: 220, y: 298, w: 154, title: "Mayor", tw: 37, cols: [["pk", "id INT", 29], ["null", "descripcion VARCHAR(255)", 131]] },
  { x: 476, y: 96, w: 96, title: "", cols: [["fk", "Partida_id INT", 70]] },
  { x: 514, y: 228, w: 105, title: "Tablas_T", tw: 54, cols: [["pk", "id INT", 29], ["null", "fecha DATE", 56], ["null", "debe FLOAT", 59], ["null", "haber FLOAT", 63], ["null", "saldo FLOAT", 60], ["fk", "Mayor_id INT", 65]] },
  { x: 630, y: 88, w: 176, title: "", cols: [null, ["null", "ingresosFinancieros FLOAT", 130], ["null", "gastosFinancieros FLOAT", 121], ["null", "ingresosExtraordinarios FLOAT", 148], ["null", "gastosExtraordinarios FLOAT", 139], ["null", "ingresosAnteriores FLOAT", 125], ["null", "gastosAnteriores FLOAT", 116], ["null", "resultadoAnteImpuestos FLOAT", 153], ["null", "impuesto FLOAT", 79], ["null", "resultadoNeto FLOAT", 103], ["null", "rentabilidadNeta FLOAT", 115], ["null", "rentabilidadSPatrimonio FLOAT", 150], ["fk", "Mayor_id INT", 65]] },
  { x: 822, y: 103, w: 190, title: "", cols: [["nn", "tiempo_preparacion VARCHAR(45)", 168], ["nn", "autor VARCHAR(45)", 97], ["null", "imagen VARCHAR(100)", 113], ["null", "descripcion TEXT", 83], ["fk", "Tipo_Pato_id INT", 84]] },
  { x: 1011, y: 209, w: 160, title: "Lote", tw: 26, cols: [["pk", "id INT", 29], ["nn", "fecha_ingreso DATE", 96], ["nn", "fecha_vencimiento DATE", 122], ["nn", "cantidad INT", 62], ["nn", "precio FLOAT", 64], ["nn", "total_pagado DOUBLE", 107], ["fk", "id_insumo INT", 70]] },
  { x: 842, y: 355, w: 138, title: "Detalle_Orden", tw: 87, cols: [["pk", "id INT", 29], ["fk", "idOrden INT", 59], ["fkn", "Receta_id INT", 68], ["fkn", "Promocion_id INT", 86]] },
  { x: 539, y: 424, w: 135, title: "Promocion", tw: 64, cols: [["pk", "id INT", 29], ["null", "nombre TEXT", 66], ["null", "precio FLOAT", 64], ["null", "descuento FLOAT", 85], ["null", "imagen VARCHAR(100)", 113], ["null", "descripcion TEXT", 83]] },
  { x: 307, y: 533, w: 160, title: "Promocion_receta", tw: 110, cols: [["pk", "id BIGINT", 47], ["fk", "promocion_id INT", 86], ["fk", "receta_id INT", 66]] },
  { x: 704, y: 536, w: 104, title: "Orden", tw: 37, cols: [["pk", "id INT", 29], ["nn", "monto INT", 52], ["null", "fecha DATETIME", 81]] },
  { x: 961, y: 511, w: 126, title: "Orden_Mesa", tw: 75, cols: [["pk", "id INT", 29], ["fk", "mesas_id INT", 66], ["fk", "orden_id INT", 63], ["fk", "clientes_nit INT", 76]] },
  { x: 470, y: 660, w: 131, title: "Suscriptores", tw: 75, cols: [null] },
  { x: 693, y: 669, w: 148, title: "Status_Mesa", tw: 76, cols: [null] },
  { x: 935, y: 679, w: 110, title: "", cols: [null] },
  { x: 1079, y: 650, w: 130, title: "Cl", tw: 12, cols: [["pk", "nit INT", 32]] }
];

const icon = (id, w, h) => `<svg width="${w}" height="${h}"><use href="#${id}"/></svg>`;
const canvas = document.getElementById("canvas");
for (const e of entities) {
  const el = document.createElement("article");
  el.className = "entity";
  el.style.left = e.x - ORIGIN.x + "px";
  el.style.top = e.y - ORIGIN.y + "px";
  el.style.width = e.w + "px";
  const rows = e.cols.map(c => c
    ? `<div class="column">${icon(c[0], 10, c[0] === "pk" ? 12 : 10)}<span data-w="${c[2]}">${c[1]}</span></div>`
    : `<div class="column"></div>`).join("");
  const head = e.title
    ? `${icon("table", 16, 16)}<span data-w="${e.tw}">${e.title}</span><svg class="down" width="9" height="8"><path d="M0 0h9L4.500 8z" fill="#686868"/></svg>`
    : "";
  const hidden = e.y > 655;
  el.innerHTML = `<header>${head}</header><div class="rows">${rows}</div>` +
    (hidden || e.title === "Cl" ? "" : `<div class="indexes"><span data-w="45">Indexes</span><svg width="8" height="9"><path d="M0 0v9l8-4.500z" fill="#707070"/></svg></div><div class="cap"></div>`);
  el.querySelector(".rows").style.height = e.cols.length * 22 - 2 + "px";
  canvas.append(el);
}

// Miniature figures in the bird's eye view: left, top, right, bottom.
const mini = "33 549 87 606,93 556 138 610,148 549 193 578,155 581 183 629,102 613 148 667,33 609 66 670,80 667 125 695,166 646 197 700,201 553 252 705,257 591 312 657,311 547 343 576,402 551 446 605,358 609 396 637,370 653 413 707,417 650 455 678,313 641 353 701,263 684 303 725,174 705 213 759,222 738 253 771,299 729 335 771,106 736 152 770,153 774 192 809,219 777 263 804,291 780 323 815,333 771 374 806,510 687 551 736,560 690 609 738,429 717 483 777,495 741 552 789,444 782 497 826,552 774 609 828,572 826 609 872,450 834 489 864,518 834 559 869,449 879 495 907,501 879 558 907,567 879 609 907";
document.getElementById("miniTables").innerHTML = mini.split(",").map(r => {
  const [l, t, rt, b] = r.split(" ").map(Number);
  return `<rect x="${l}" y="${t}" width="${rt - l}" height="${b - t}" fill="#98bfda" stroke="#d7e8f2" stroke-width="2"/>`;
}).join("");

// Track each label so that it fills its declared width.
for (const el of document.querySelectorAll("[data-w]")) {
  const range = document.createRange();
  range.selectNodeContents(el);
  const natural = range.getBoundingClientRect().width;
  el.style.letterSpacing = (el.dataset.w - natural) / el.textContent.length + "px";
}
```
